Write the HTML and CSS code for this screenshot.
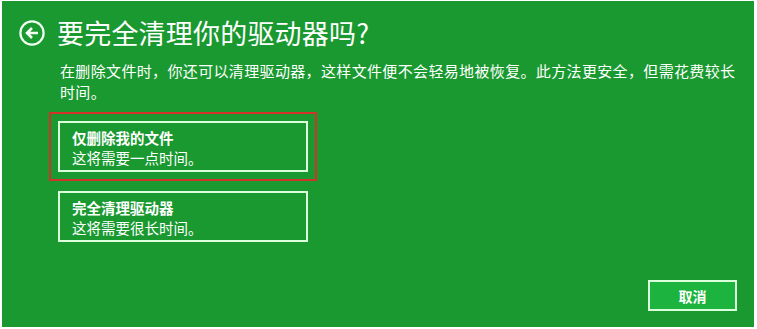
FILE: index.html
```html
<!DOCTYPE html>
<html lang="zh-CN">
<head>
    <meta charset="UTF-8">
    <meta name="viewport" content="width=device-width, initial-scale=1.0">
    <title>要完全清理你的驱动器吗?</title>
    <link rel="stylesheet" href="styles.css">
</head>
<body>

    <!-- Janela de diálogo -->
    <div class="dialog">
        <header class="dialog-header">
            <svg class="back-btn" width="26" height="26" viewBox="0 0 26 26">
                <circle cx="13" cy="13" r="11.6" fill="none" stroke="#f2fff2" stroke-width="2.2"/>
                <path d="M19 13H8.5M13 8l-5 5 5 5" fill="none" stroke="#f2fff2" stroke-width="2.6" stroke-linejoin="miter"/>
            </svg>
            <h1>要完全清理你的驱动器吗?</h1>
        </header>

        <p class="intro">在删除文件时，你还可以清理驱动器，这样文件便不会轻易地被恢复。此方法更安全，但需花费较长时间。</p>

        <div class="options">
            <button class="option selected">
                <strong>仅删除我的文件</strong>
                <span>这将需要一点时间。</span>
            </button>
            <button class="option">
                <strong>完全清理驱动器</strong>
                <span>这将需要很长时间。</span>
            </button>
        </div>

        <div class="actions">
            <button class="cancel">取消</button>
        </div>
    </div>

</body>
</html>
```

FILE: styles.css
```css
/* Base */
body {
    margin: 0;
    background: #ffffff;
    font-family: "Noto Sans CJK SC", "Noto Sans", sans-serif;
}

.dialog {
    box-sizing: border-box;
    height: 326px;
    margin: 1px 3px 2px 2px;
    padding: 17px 17px 16px 17px;
    background-color: #1a9930;
    color: #ffffff;
    display: flex;
    flex-direction: column;
}

/* Cabeçalho */
.dialog-header {
    display: flex;
    align-items: center;
    gap: 12px;
}

.back-btn {
    flex: none;
}

.dialog-header h1 {
    margin: 0;
    font-size: 27px;
    font-weight: 400;
    line-height: 30px;
    letter-spacing: 0.2px;
}

.intro {
    margin: 12px 0 0 41px;
    max-width: 680px;
    font-size: 15px;
    line-height: 21px;
    letter-spacing: 0.35px;
}

/* Opções */
.options {
    display: flex;
    flex-direction: column;
    gap: 19px;
    margin: 19px 0 0 39px;
}

.option {
    box-sizing: border-box;
    width: 250px;
    height: 51px;
    padding: 5px 12px 0;
    background: transparent;
    border: 2px solid #dcffdc;
    color: #ffffff;
    font-family: inherit;
    text-align: left;
    display: flex;
    flex-direction: column;
    cursor: pointer;
}

.option strong {
    font-size: 14.5px;
    font-weight: 700;
    line-height: 20px;
}

.option span {
    font-size: 14.5px;
    line-height: 20px;
}

.option.selected {
    outline: 2px solid #d2322a;
    outline-offset: 7px;
}

/* Botão cancelar */
.actions {
    margin-top: auto;
    display: flex;
    justify-content: flex-end;
}

.cancel {
    width: 89px;
    height: 31px;
    background-color: #1cb43e;
    border: 2px solid #dcffdc;
    color: #ffffff;
    font-family: inherit;
    font-size: 14px;
    font-weight: 700;
    cursor: pointer;
}
```
